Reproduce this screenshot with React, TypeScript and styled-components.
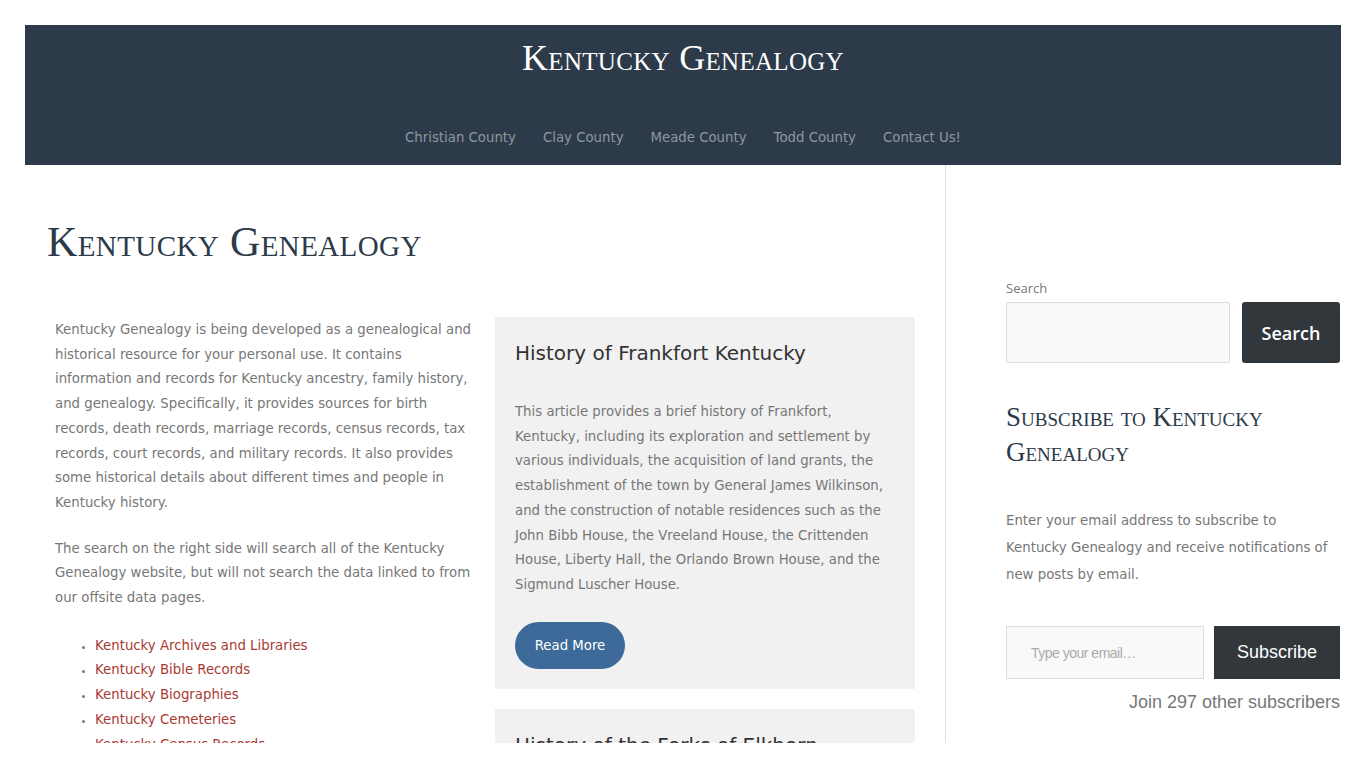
import styled, { createGlobalStyle } from "styled-components";

const GlobalStyle = createGlobalStyle`
  html, body {
    margin: 0;
    padding: 0;
    background: #fff;
    overflow: hidden;
  }
  body {
    font-family: "DejaVu Sans", Verdana, sans-serif;
  }
  * { box-sizing: border-box; }
`;

const navItems = ["Christian County", "Clay County", "Meade County", "Todd County", "Contact Us!"];

const links = [
  "Kentucky Archives and Libraries",
  "Kentucky Bible Records",
  "Kentucky Biographies",
  "Kentucky Cemeteries",
  "Kentucky Census Records",
  "Kentucky Church Records",
];

const App = () => {
  return (
    <>
      <GlobalStyle />
      <Frame>
        <Page>
          <Header>
            <SiteTitle>Kentucky Genealogy</SiteTitle>
            <Nav>
              {navItems.map((n) => (
                <NavLink key={n}>{n}</NavLink>
              ))}
            </Nav>
          </Header>

          <Body>
            <Main>
              <PageTitle>Kentucky Genealogy</PageTitle>
              <Columns>
                <Intro>
                  <Para>
                    Kentucky Genealogy is being developed as a genealogical and historical resource for
                    your personal use. It contains information and records for Kentucky ancestry, family
                    history, and genealogy. Specifically, it provides sources for birth records, death
                    records, marriage records, census records, tax records, court records, and military
                    records. It also provides some historical details about different times and people in
                    Kentucky history.
                  </Para>
                  <Para>
                    The search on the right side will search all of the Kentucky Genealogy website, but
                    will not search the data linked to from our offsite data pages.
                  </Para>
                  <LinkList>
                    {links.map((l) => (
                      <li key={l}>
                        <RedLink>{l}</RedLink>
                      </li>
                    ))}
                  </LinkList>
                </Intro>

                <Posts>
                  <Card>
                    <CardTitle>History of Frankfort Kentucky</CardTitle>
                    <CardText>
                      This article provides a brief history of Frankfort, Kentucky, including its
                      exploration and settlement by various individuals, the acquisition of land grants,
                      the establishment of the town by General James Wilkinson, and the construction of
                      notable residences such as the John Bibb House, the Vreeland House, the Crittenden
                      House, Liberty Hall, the Orlando Brown House, and the Sigmund Luscher House.
                    </CardText>
                    <ReadMore>Read More</ReadMore>
                  </Card>
                  <Card>
                    <CardTitle>History of the Forks of Elkhorn</CardTitle>
                    <CardText>
                      This article tells the history of the Forks of Elkhorn settlement in Kentucky.
                    </CardText>
                  </Card>
                </Posts>
              </Columns>
            </Main>

            <Sidebar>
              <Label>Search</Label>
              <SearchRow>
                <SearchInput />
                <DarkButton $size={18}>Search</DarkButton>
              </SearchRow>

              <WidgetTitle>Subscribe to Kentucky Genealogy</WidgetTitle>
              <SideText>
                Enter your email address to subscribe to Kentucky Genealogy and receive notifications
                of new posts by email.
              </SideText>
              <SubscribeRow>
                <EmailInput placeholder="Type your email…" />
                <SubscribeButton>Subscribe</SubscribeButton>
              </SubscribeRow>
              <JoinText>Join 297 other subscribers</JoinText>
            </Sidebar>
          </Body>
        </Page>
      </Frame>
    </>
  );
};

export default App;

const Frame = styled.div`
  width: 100vw;
  height: 100vh;
  padding: 25px;
`;

const Page = styled.div`
  width: 100%;
  height: calc(100vh - 50px);
  overflow: hidden;
  background: #fff;
`;

const Header = styled.header`
  background: #2c3a4a;
  height: 140px;
  display: flex;
  flex-direction: column;
  align-items: center;
  padding-top: 11px;
`;

const SiteTitle = styled.div`
  font-family: "Liberation Serif", serif;
  font-variant: small-caps;
  font-size: 36px;
  color: #fff;
  line-height: 44px;
  letter-spacing: 0.3px;
`;

const Nav = styled.nav`
  display: flex;
  gap: 27px;
  margin-top: 48px;
`;

const NavLink = styled.a`
  font-size: 13.3px;
  color: #8f979f;
  line-height: 20px;
`;

const Body = styled.div`
  display: flex;
`;

const Main = styled.main`
  width: 921px;
  border-right: 1px solid #dddddd;
  padding: 55px 30px 0 22px;
  min-height: 700px;
`;

const PageTitle = styled.h1`
  margin: 0;
  font-family: "Liberation Serif", serif;
  font-variant: small-caps;
  font-weight: normal;
  font-size: 42px;
  letter-spacing: 0.4px;
  line-height: 44px;
  color: #2c3a4a;
`;

const Columns = styled.div`
  display: flex;
  gap: 20px;
  margin-top: 53px;
`;

const Intro = styled.div`
  width: 428px;
  padding: 1px 0 0 8px;
`;

const Para = styled.p`
  margin: 0 0 21px;
  font-size: 13.3px;
  line-height: 24.7px;
  color: #777;
`;

const LinkList = styled.ul`
  margin: 23px 0 0;
  padding-left: 40px;
  font-size: 13.3px;
  line-height: 24.7px;
  color: #777;
  li::marker {
    font-size: 11px;
  }
`;

const RedLink = styled.a`
  color: #a93a32;
`;

const Posts = styled.div`
  width: 420px;
  display: flex;
  flex-direction: column;
  gap: 20px;
`;

const Card = styled.article`
  background: #f1f1f1;
  padding: 22px 20px 20px;
`;

const CardTitle = styled.h2`
  margin: 0;
  font-size: 20px;
  font-weight: normal;
  line-height: 28px;
  color: #333;
`;

const CardText = styled.p`
  margin: 33px 0 24px;
  font-size: 13.3px;
  line-height: 24.7px;
  color: #777;
`;

const ReadMore = styled.button`
  background: #3d6a99;
  color: #fff;
  border: none;
  border-radius: 24px;
  width: 110px;
  height: 47px;
  font-family: "DejaVu Sans", Verdana, sans-serif;
  font-size: 13.3px;
  cursor: pointer;
`;

const Sidebar = styled.aside`
  flex: 1;
  padding: 114px 0 0 60px;
`;

const Label = styled.div`
  font-family: "Open Sans", sans-serif;
  font-size: 13px;
  color: #777;
  line-height: 18px;
  margin-bottom: 5px;
`;

const SearchRow = styled.div`
  display: flex;
  gap: 12px;
`;

const SearchInput = styled.input`
  width: 224px;
  height: 61px;
  background: #f9f9f9;
  border: 1px solid #dddddd;
  border-radius: 2px;
`;

const DarkButton = styled.button<{ $size: number }>`
  width: 98px;
  height: 61px;
  background: #32373c;
  color: #fff;
  border: none;
  border-radius: 3px;
  font-family: "Open Sans", sans-serif;
  font-weight: 600;
  font-size: ${(p) => p.$size}px;
`;

const WidgetTitle = styled.h3`
  margin: 37px 0 0;
  font-family: "Liberation Serif", serif;
  font-variant: small-caps;
  font-weight: normal;
  font-size: 27px;
  line-height: 35px;
  color: #2c3a4a;
  width: 290px;
`;

const SideText = styled.p`
  margin: 37px 0 0;
  width: 328px;
  font-size: 13.3px;
  line-height: 27px;
  color: #777;
`;

const SubscribeRow = styled.div`
  display: flex;
  gap: 10px;
  margin-top: 38px;
`;

const EmailInput = styled.input`
  width: 198px;
  height: 53px;
  background: #f9f9f9;
  border: 1px solid #dddddd;
  padding: 0 24px;
  font-family: "Liberation Sans Narrow", "Liberation Sans", sans-serif;
  font-size: 14px;
  &::placeholder {
    color: #aaa;
    letter-spacing: -0.5px;
  }
`;

const SubscribeButton = styled.button`
  width: 126px;
  height: 53px;
  background: #32373c;
  color: #fff;
  border: none;
  font-family: "Liberation Sans", Arial, sans-serif;
  font-size: 18px;
`;

const JoinText = styled.div`
  width: 334px;
  text-align: right;
  font-family: "Liberation Sans", Arial, sans-serif;
  font-size: 18px;
  color: #777;
  margin-top: 13px;
`;
